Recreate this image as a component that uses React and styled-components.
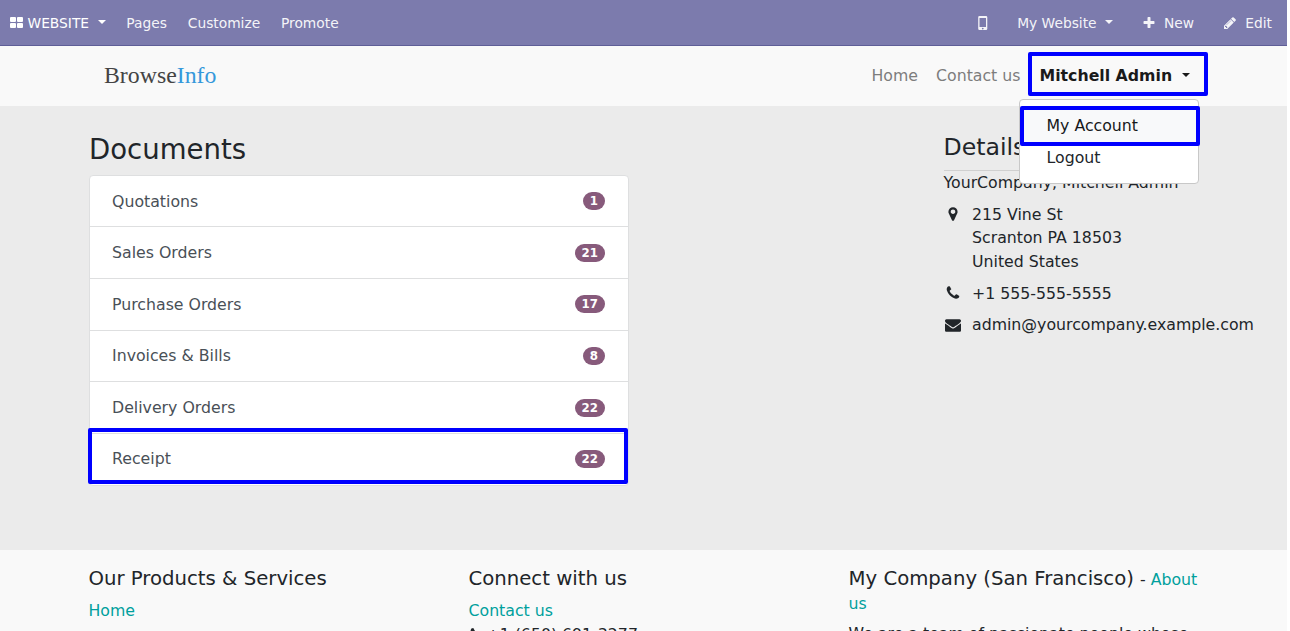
import React from 'react';
import styled, { createGlobalStyle, css } from 'styled-components';

const Global = createGlobalStyle`
  *, *::before, *::after { box-sizing: border-box; }
  html, body { margin: 0; background: #fff; overflow: hidden; }
  body {
    font-family: "DejaVu Sans", sans-serif;
    font-size: 15.75px;
    line-height: 23.625px;
    color: #212529;
  }
  h2, h3, h4, p, ul { margin: 0; padding: 0; font-weight: 400; }
  a { color: inherit; text-decoration: none; }
`;

const Page = styled.div`
  width: 1287px;
  height: 631px;
  overflow: hidden;
  background: #ebebeb;
  display: flex;
  flex-direction: column;
`;

const TopBar = styled.nav`
  height: 46px;
  flex: none;
  display: flex;
  justify-content: space-between;
  padding: 0 15px 0 10px;
  background: #7c7bad;
  border-bottom: 1px solid #5f5e97;
  color: #fff;
  font-size: 13.8px;
  line-height: 45px;
`;

const TopGroup = styled.div`
  display: flex;
  gap: ${(p) => p.$gap}px;
`;

const TopItem = styled.a`
  display: flex;
  align-items: center;
  white-space: nowrap;
  gap: ${(p) => p.$gap || 0}px;
  opacity: ${(p) => (p.$bright ? 1 : 0.92)};
`;

const TopLabel = styled.span`
  padding-top: 1px;
  line-height: 20px;
`;

const Caret = styled.span`
  border: 4px solid transparent;
  border-top-color: currentColor;
  border-bottom: 0;
  margin: 0 0 2px ${(p) => p.$left || 8}px;
`;

const Glyph = styled.svg`
  width: ${(p) => p.$w}px;
  height: ${(p) => p.$h || p.$w}px;
  fill: currentColor;
  flex: none;
`;

const Header = styled.header`
  height: 60px;
  flex: none;
  display: flex;
  justify-content: space-between;
  align-items: center;
  padding: 0 79px 0 104px;
  background: #f9f9f9;
`;

const Logo = styled.a`
  font-family: "Liberation Serif", serif;
  font-size: 23.8px;
  color: #444;
  span { color: #3498db; }
`;

const Menu = styled.div`
  display: flex;
  align-items: center;
  color: #7d7d7d;
`;

const MenuLink = styled.a`
  margin-right: ${(p) => p.$right}px;
`;

const highlight = css`
  border: 4px solid #0000ff;
  border-radius: 2px;
`;

const UserMenu = styled.div`
  ${highlight}
  position: relative;
  width: 180px;
  height: 44px;
  margin-bottom: 4px;
  display: flex;
  align-items: center;
  padding: 4px 0 0 7.5px;
  color: #1a1a1a;
  font-weight: 700;
`;

const Dropdown = styled.div`
  position: absolute;
  z-index: 2;
  top: 43px;
  left: -13px;
  width: 180px;
  height: 85px;
  padding-top: 6px;
  background: #fff;
  border: 1px solid #c8c8c8;
  border-radius: 4px;
  font-weight: 400;
  color: #212529;
`;

const DropItem = styled.a`
  display: flex;
  align-items: center;
  height: 24px;
  padding-left: 26.5px;
  ${(p) => p.$active && css`
    ${highlight}
    height: 40px;
    margin: 0 -2px 0 0;
    padding-left: 22.5px;
    background: #f8f9fa;
    color: #16181b;
  `}
`;

const Main = styled.main`
  height: 444px;
  flex: none;
  display: flex;
  padding: 0 30px 0 89px;
`;

const Documents = styled.section`
  width: 540px;
  margin-right: 314.5px;
  padding-top: 25px;
`;

const Heading = styled.h2`
  font-size: 27.56px;
  line-height: 36px;
  margin-bottom: 8px;
`;

const List = styled.div`
  border: 1px solid #dedfe0;
  border-radius: 4px;
  background: #fff;
`;

const Row = styled.a`
  display: flex;
  align-items: center;
  justify-content: space-between;
  height: ${(p) => (p.$first ? 50.4 : 51.65)}px;
  padding: ${(p) => (p.$first ? 0.6 : 0)}px 23px 0 22px;
  color: #495057;
  border-top: ${(p) => (p.$first ? 0 : 1)}px solid #dedfe0;
  ${(p) => p.$marked && css`
    position: relative;
    &::after {
      content: "";
      position: absolute;
      inset: -6px 0 0.65px -2px;
      ${highlight}
    }
  `}
`;

const Badge = styled.span`
  padding: 0 7px;
  height: 18px;
  line-height: 18px;
  border-radius: 9px;
  background: #875a7b;
  color: #fff;
  font-size: 11.8px;
  font-weight: 700;
`;

const Details = styled.aside`
  flex: 1;
  padding-top: 25px;
`;

const DetailsTitle = styled.h3`
  font-size: 23.625px;
  line-height: 32px;
  height: 40px;
  width: 255px;
  border-bottom: 1px solid #d0d0d0;
`;

const Contact = styled.div`
  display: flex;
  margin-bottom: 8px;
`;

const ContactIcon = styled.span`
  width: 19.5px;
  height: 23px;
  margin-right: 9px;
  display: flex;
  align-items: center;
  justify-content: center;
`;

const Footer = styled.footer`
  flex: 1;
  min-height: 0;
  display: flex;
  padding: 17px 0 0 88.5px;
  background: #f9f9f9;
`;

const FooterCol = styled.div`
  width: 380px;
  flex: none;
  white-space: nowrap;
`;

const FooterTitle = styled.h4`
  font-size: 19.69px;
  line-height: 24px;
  margin-bottom: 8px;
`;

const Teal = styled.a`
  color: #00a09d;
`;

const FooterPhone = styled.div`
  display: flex;
  align-items: center;
  gap: 3px;
`;

const About = styled.div`
  width: 355px;
  white-space: normal;
  margin-bottom: 7px;
  h4 { display: inline; margin-right: 1px; }
`;

const paths = {
  plus: 'M1600 736v192q0 40-28 68t-68 28h-416v416q0 40-28 68t-68 28h-192q-40 0-68-28t-28-68v-416h-416q-40 0-68-28t-28-68v-192q0-40 28-68t68-28h416v-416q0-40 28-68t68-28h192q40 0 68 28t28 68v416h416q40 0 68 28t28 68z',
  pencil: 'M491 1536l91-91-235-235-91 91v107h128v128h107zm523-928q0-22-22-22-10 0-17 7l-542 542q-7 7-7 17 0 22 22 22 10 0 17-7l542-542q7-7 7-17zm-54-192l416 416-832 832h-416v-416zm683 96q0 53-37 90l-166 166-416-416 166-165q36-38 90-38 53 0 91 38l235 234q37 39 37 91z',
  phone: 'M1600 1240q0 27-10 70.5t-21 68.5q-21 50-122 106-94 51-186 51-27 0-53-3.5t-57.5-12.5-47-14.5-55.5-20.5-49-18q-98-35-175-83-127-79-264-216t-216-264q-48-77-83-175-3-9-18-49t-20.5-55.5-14.5-47-12.5-57.5-3.5-53q0-92 51-186 56-101 106-122 25-11 68.5-21t70.5-10q14 0 21 3 18 6 53 76 11 19 30 54t35 63.5 31 53.5q3 4 17.5 25t21.5 35.5 7 28.5q0 20-28.5 50t-62 55-62 53-28.5 46q0 9 5 22.5t8.5 20.5 14 24 11.5 19q76 137 174 235t235 174q2 1 19 11.5t24 14 20.5 8.5 22.5 5q18 0 46-28.5t53-62 55-62 50-28.5q14 0 28.5 7t35.5 21.5 25 17.5q25 15 53.5 31t63.5 35 54 30q70 35 76 53 3 7 3 21z',
  envelope: 'M1792 710v794q0 66-47 113t-113 47h-1472q-66 0-113-47t-47-113v-794q44 49 101 87 362 246 497 345 57 42 92.5 65.5t94.5 48 110 24.5h2q51 0 110-24.5t94.5-48 92.5-65.5q170-123 498-345 57-39 100-87zm0-294q0 79-49 151t-122 123q-376 261-468 325-10 7-42.5 31t-54 38.5-52 32.5-57.5 27-50 9h-2q-23 0-50-9t-57.5-27-52-32.5-54-38.5-42.5-31q-91-64-262-182.5t-205-142.5q-62-42-117-115.5t-55-136.5q0-78 41.5-130t118.5-52h1472q65 0 112.5 47t47.5 113z',
  marker: 'M1152 640q0-106-75-181t-181-75-181 75-75 181 75 181 181 75 181-75 75-181zm256 0q0 109-33 179l-364 774q-16 33-47.5 52t-67.5 19-67.5-19-46.5-52l-365-774q-33-70-33-179 0-212 150-362t362-150 362 150 150 362z',
};

const Icon = ({ name, size }) => (
  <Glyph $w={size} viewBox="0 0 1792 1792"><path d={paths[name]} /></Glyph>
);

const GridIcon = () => (
  <Glyph $w={13} $h={11} viewBox="0 0 13 11">
    <rect width="6" height="5" rx="1" />
    <rect x="7" width="6" height="5" rx="1" />
    <rect y="6" width="6" height="5" rx="1" />
    <rect x="7" y="6" width="6" height="5" rx="1" />
  </Glyph>
);

const MobileIcon = () => (
  <Glyph $w={10} $h={14} viewBox="0 0 10 14">
    <path fillRule="evenodd" d="M1.5 0h6.5a1.3 1.3 0 0 1 1.3 1.3v11.4a1.3 1.3 0 0 1-1.3 1.3h-6.5a1.3 1.3 0 0 1-1.3-1.3v-11.4a1.3 1.3 0 0 1 1.3-1.3zM1.5 2v9h6.5v-9zM4.75 11.7a.8.8 0 1 0 .01 0z" />
  </Glyph>
);

const documents = [
  ['Quotations', 1],
  ['Sales Orders', 21],
  ['Purchase Orders', 17],
  ['Invoices & Bills', 8],
  ['Delivery Orders', 22],
  ['Receipt', 22],
];

export default function App() {
  return (
    <>
      <Global />
      <Page>
        <TopBar>
          <TopGroup $gap={20.8}>
            <TopItem $gap={4.5} $bright><GridIcon /><TopLabel>WEBSITE</TopLabel><Caret $left={4} /></TopItem>
            <TopItem><TopLabel>Pages</TopLabel></TopItem>
            <TopItem><TopLabel>Customize</TopLabel></TopItem>
            <TopItem><TopLabel>Promote</TopLabel></TopItem>
          </TopGroup>
          <TopGroup $gap={29.3}>
            <TopItem><MobileIcon /></TopItem>
            <TopItem><TopLabel>My Website</TopLabel><Caret /></TopItem>
            <TopItem $gap={8}><Icon name="plus" size={14} /><TopLabel>New</TopLabel></TopItem>
            <TopItem $gap={8}><Icon name="pencil" size={14} /><TopLabel>Edit</TopLabel></TopItem>
          </TopGroup>
        </TopBar>
        <Header>
          <Logo>Browse<span>Info</span></Logo>
          <Menu>
            <MenuLink $right={18}>Home</MenuLink>
            <MenuLink $right={7.5}>Contact us</MenuLink>
            <UserMenu>
              Mitchell Admin<Caret $left={10} />
              <Dropdown>
                <DropItem $active>My Account</DropItem>
                <DropItem>Logout</DropItem>
              </Dropdown>
            </UserMenu>
          </Menu>
        </Header>
        <Main>
          <Documents>
            <Heading>Documents</Heading>
            <List>
              {documents.map(([label, count], i) => (
                <Row key={label} $first={i === 0} $marked={label === 'Receipt'}>
                  {label}<Badge>{count}</Badge>
                </Row>
              ))}
            </List>
          </Documents>
          <Details>
            <DetailsTitle>Details</DetailsTitle>
            <Contact>YourCompany, Mitchell Admin</Contact>
            <Contact>
              <ContactIcon><Icon name="marker" size={16} /></ContactIcon>
              <div>215 Vine St<br />Scranton PA 18503<br />United States</div>
            </Contact>
            <Contact>
              <ContactIcon><Icon name="phone" size={16} /></ContactIcon>
              +1 555-555-5555
            </Contact>
            <Contact>
              <ContactIcon><Icon name="envelope" size={16} /></ContactIcon>
              admin@yourcompany.example.com
            </Contact>
          </Details>
        </Main>
        <Footer>
          <FooterCol>
            <FooterTitle>Our Products &amp; Services</FooterTitle>
            <Teal>Home</Teal>
          </FooterCol>
          <FooterCol>
            <FooterTitle>Connect with us</FooterTitle>
            <Teal>Contact us</Teal>
            <FooterPhone><Icon name="phone" size={15} />+1 (650) 691-3277</FooterPhone>
          </FooterCol>
          <FooterCol>
            <About><FooterTitle>My Company (San Francisco)</FooterTitle> - <Teal>About us</Teal></About>
            <p>We are a team of passionate people whose</p>
          </FooterCol>
        </Footer>
      </Page>
    </>
  );
}
